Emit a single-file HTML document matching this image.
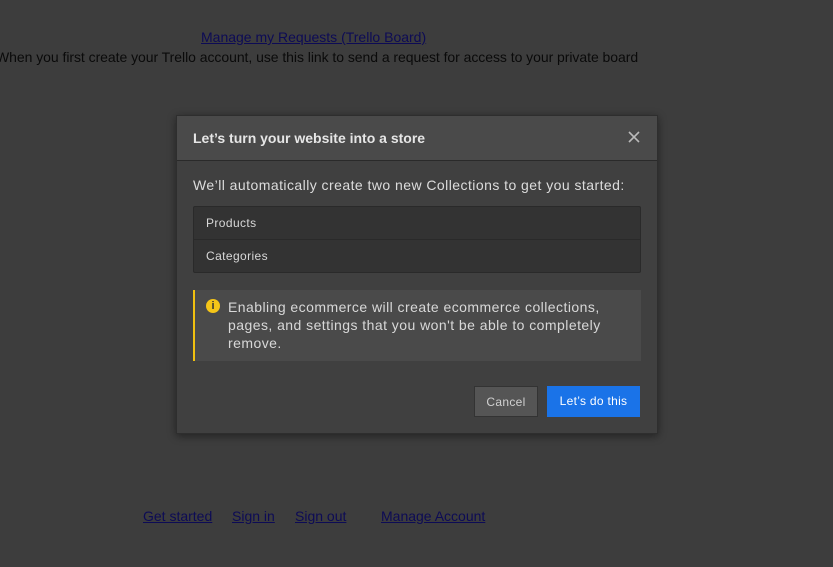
<!DOCTYPE html>
<html><head><meta charset="utf-8"><style>
body{margin:0;width:833px;height:567px;background:#3d3d3d;font-family:"Liberation Sans",sans-serif;position:relative;overflow:hidden}
a{color:#0d0b55;text-decoration:underline}
.t{position:absolute;font-size:14px;white-space:nowrap}
.modal{position:absolute;left:176px;top:115px;width:482px;height:319px;background:#404040;box-shadow:0 2px 8px rgba(0,0,0,.45);border:1px solid #2e2e2e;box-sizing:border-box;color:#e0e0e0}
.hd{height:44px;background:#4a4a4a;border-bottom:1px solid #2a2a2a;font-weight:bold;font-size:14px;line-height:44px;padding-left:16px;color:#e6e6e6}
.x{position:absolute;right:15px;top:13px;width:16px;height:16px}
.p{position:absolute;left:16px;top:61px;font-size:14px;color:#dcdcdc;letter-spacing:0.45px;white-space:nowrap}
.list{position:absolute;left:16px;top:90px;width:448px;height:67px;background:#333;border:1px solid #2a2a2a;box-sizing:border-box;border-radius:2px;font-size:12px;color:#d8d8d8;letter-spacing:0.4px}
.list div{height:32px;line-height:32px;padding-left:12px}
.list div+div{border-top:1px solid #2a2a2a}
.warn{position:absolute;left:16px;top:174px;width:448px;height:71px;background:#4a4a4a;border-left:2px solid #f0c010;box-sizing:border-box;font-size:14px;line-height:18px;color:#d8d8d8;padding:8px 10px 0 33px;letter-spacing:0.45px}
.ic{position:absolute;left:11px;top:9px;width:14px;height:14px;border-radius:50%;background:#f5c518;color:#333;font-size:11px;font-weight:bold;text-align:center;line-height:14px;letter-spacing:0}
.btn{position:absolute;top:270px;height:31px;line-height:31px;font-size:12px;text-align:center;box-sizing:border-box;letter-spacing:0.3px}
</style></head><body>
<div class="t" style="left:201px;top:29px"><a>Manage my Requests (Trello Board)</a></div>
<div class="t" style="left:-4px;top:49px;color:#0a0a0a;letter-spacing:-0.05px">When you first create your Trello account, use this link to send a request for access to your private board</div>
<div class="t" style="left:143px;top:508px"><a>Get started</a></div>
<div class="t" style="left:232px;top:508px"><a>Sign in</a></div>
<div class="t" style="left:295px;top:508px"><a>Sign out</a></div>
<div class="t" style="left:381px;top:508px"><a>Manage Account</a></div>
<div class="modal">
<div class="hd">Let’s turn your website into a store</div>
<svg class="x" viewBox="0 0 16 16"><path d="M3 3L13 13M13 3L3 13" stroke="#bbb" stroke-width="1.6"/></svg>
<div class="p">We’ll automatically create two new Collections to get you started:</div>
<div class="list"><div>Products</div><div>Categories</div></div>
<div class="warn"><div class="ic">i</div>Enabling ecommerce will create ecommerce collections, pages, and settings that you won't be able to completely remove.</div>
<div class="btn" style="left:297px;width:64px;background:#555;border:1px solid #333;color:#d0d0d0">Cancel</div>
<div class="btn" style="left:370px;width:93px;background:#1a73e8;color:#fff">Let’s do this</div>
</div>
</body></html>
